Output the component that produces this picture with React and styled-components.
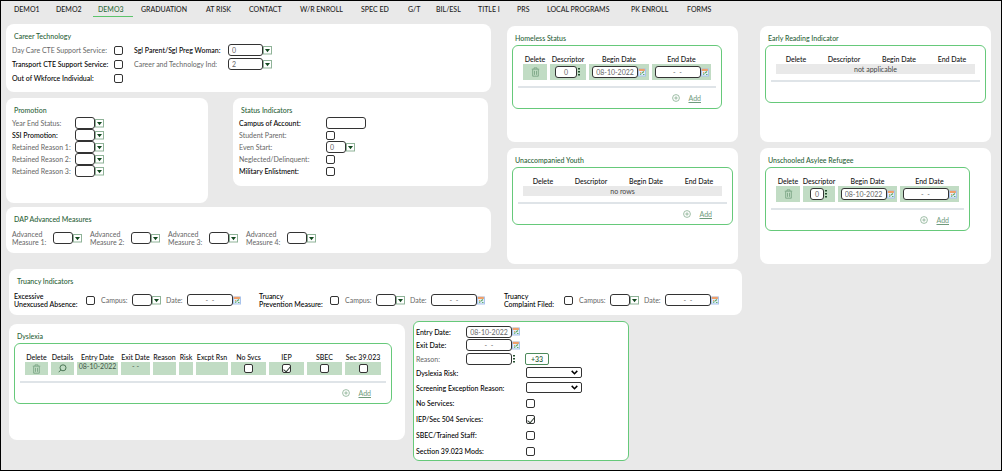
import React, { useId } from 'react';
import styled, { createGlobalStyle } from 'styled-components';

const GlobalStyle = createGlobalStyle`
  * {
    box-sizing: border-box;
  }
  body {
    margin: 0;
    font-family: Lato, "Open Sans", sans-serif;
    font-size: 7px;
    line-height: 8px;
    color: #111;
    background: #e9e9e9;
  }
  input, select, button {
    font-family: inherit;
    font-size: inherit;
    line-height: inherit;
    margin: 0;
    padding: 0;
  }
`;

const Page = styled.div`
  min-height: 100vh;
  border: 1px solid #000;
  padding: 0 10px 8px 5px;
  background: #e9e9e9;
`;

/* ---- tabs ---- */

const Tabs = styled.nav`
  display: grid;
  grid-template-columns: 42px 42px 43px 65px 43px 51px 61px 47px 28px 42px 39px 30px 84px 56px 40px;
  padding-left: 3px;
  height: 16px;
`;

const Tab = styled.a`
  justify-self: start;
  padding: 4px 9px 3px 5px;
  font-weight: 500;
  white-space: nowrap;
  text-decoration: none;
  color: ${p => (p.$active ? '#2e6b3c' : '#1c1c1c')};
  border-bottom: 1px solid ${p => (p.$active ? '#5cc46c' : 'transparent')};
`;

/* ---- page layout ---- */

const Upper = styled.div`
  display: grid;
  grid-template-columns: 485fr 484fr;
  column-gap: 16px;
  padding-top: 7px;
`;

const LeftColumn = styled.div`
  display: flex;
  flex-direction: column;
`;

const SplitRow = styled.div`
  display: grid;
  grid-template-columns: 202fr 255fr;
  column-gap: 25px;
  align-items: start;
  margin: 6px 3px 4px 0;
`;

const StatusGrid = styled.div`
  display: grid;
  grid-template-columns: 1fr 1fr;
  gap: 6px 22px;
  padding-top: 2px;
`;

const Lower = styled.div`
  padding: 5px 0 0 3px;
`;

const TruancyLine = styled.div`
  display: grid;
  grid-template-columns: 733fr 249fr;
`;

const LowerRow = styled.div`
  display: grid;
  grid-template-columns: 396fr 216fr 354fr;
  column-gap: 8px;
  align-items: start;
  margin-top: 9px;
`;

const Panel = styled.section`
  min-height: ${p => p.$min || 0}px;
  padding: 6px 5px 7px;
  background: #fff;
  border-radius: 8px;
`;

const Title = styled.h2`
  margin: 0;
  padding: 2px 3px 3px;
  font-size: 7px;
  line-height: 8px;
  font-weight: 500;
  color: #2b5f38;
`;

/* ---- form parts ---- */

const FormGrid = styled.div`
  display: grid;
  grid-template-columns: ${p => p.$columns};
  grid-auto-rows: ${p => p.$row}px;
  align-items: center;
  padding-left: 1px;
`;

const MeasureRow = styled.div`
  display: grid;
  grid-template-columns: repeat(4, 78px);
  padding: 4px 0 0 1px;
`;

const Measure = styled.div`
  display: grid;
  grid-template-columns: 41px auto;
  justify-content: start;
`;

const TruancyRow = styled.div`
  display: grid;
  grid-template-columns: 245fr 245fr 233fr;
  padding-top: 4px;
`;

const TruancyGroup = styled.div`
  display: grid;
  grid-template-columns: ${p => p.$label}px 15px 31px 34px 21px auto;
  align-items: center;
  justify-content: start;
`;

const Label = styled.label`
  font-weight: ${p => (p.$strong ? 500 : 400)};
  color: ${p => (p.$strong ? '#000' : '#666')};
  white-space: pre;
`;

const Field = styled.span`
  display: flex;
  align-items: center;
`;

const TextBox = styled.input`
  width: ${p => p.$width || 20}px;
  height: 12px;
  padding: 0 3px;
  color: #666;
  text-align: ${p => p.$align || 'left'};
  background: #fff;
  border: 1px solid #333;
  border-radius: 3px;
`;

const Check = styled.input.attrs({ type: 'checkbox' })`
  appearance: none;
  display: block;
  width: 9px;
  height: 9px;
  border: 1px solid #333;
  border-radius: 2px;
  background: #fff;
  &:checked::after {
    content: "";
    display: block;
    width: 3px;
    height: 6px;
    margin: 0 0 0 2px;
    border: solid #2d3b30;
    border-width: 0 1px 1px 0;
    transform: rotate(40deg);
  }
`;

const IconButton = styled.button`
  display: flex;
  border: none;
  background: none;
  cursor: pointer;
`;

const SelectWrap = styled.span`
  position: relative;
  display: block;
  width: 56px;
  height: 11px;
  svg {
    position: absolute;
    right: 4px;
    top: 3px;
    pointer-events: none;
  }
`;

const SelectBox = styled.select`
  display: block;
  appearance: none;
  width: 100%;
  height: 11px;
  background: #fff;
  border: 1px solid #333;
  border-radius: 2px;
`;

/* ---- tables ---- */

const TableBox = styled.div`
  width: fit-content;
  padding: 8px 5px 0;
  border: 1px solid #66c97a;
  border-radius: 6px;
`;

const Table = styled.table`
  margin: 0 2px;
  border-collapse: separate;
  border-spacing: 3px 0;
  table-layout: fixed;
  width: ${p => p.$width}px;
  th, td {
    padding: 0;
    text-align: center;
    white-space: nowrap;
  }
  th {
    height: 10px;
    font-weight: 500;
  }
  th > span {
    display: flex;
    justify-content: center;
  }
`;

const Cell = styled.td`
  height: ${p => p.$height || 16}px;
  vertical-align: ${p => p.$valign || 'middle'};
  color: #3f5546;
  background: #c1dcc4;
`;

const CellInner = styled.span`
  display: flex;
  align-items: center;
  justify-content: center;
`;

const EmptyCell = styled.td`
  height: 10px;
  color: #444;
  background: #e9e9e9;
`;

const Rule = styled.hr`
  height: 2px;
  margin: 6px 0 0;
  border: none;
  background: #dfe4e8;
`;

const AddRow = styled.div`
  display: flex;
  align-items: center;
  justify-content: flex-end;
  gap: 8px;
  height: 20px;
  padding-right: 15px;
`;

const AddLink = styled.a`
  color: #6f9a7c;
`;

/* ---- dyslexia details ---- */

const DetailBox = styled.section`
  margin-top: -3px;
  padding: 3px 2px 1px;
  background: #fff;
  border: 1px solid #66c97a;
  border-radius: 6px;
`;

const DetailRow = styled.div`
  display: grid;
  grid-template-columns: ${p => (p.$wide ? 110 : 50)}px auto;
  align-items: center;
  justify-content: start;
  height: ${p => p.$height}px;
`;

const CountButton = styled.button`
  width: 24px;
  height: 12px;
  margin-left: 9px;
  font-weight: 600;
  color: #2b5f38;
  background: #fff;
  border: 1px solid #4c8a5b;
  border-radius: 2px;
`;

/* ---- icons ---- */

const TriangleIcon = () => (
  <svg width="9" height="9" viewBox="0 0 9 9">
    <rect x="0.5" y="0.5" width="8" height="7.5" fill="#fff" stroke="#8fb398" />
    <path d="M2 3h5L4.500 6.200z" fill="#12491f" />
  </svg>
);

const CalendarIcon = () => (
  <svg width="8" height="9" viewBox="0 0 8 9">
    <rect x="0" y="0.500" width="8" height="8" fill="#a9c3ec" />
    <rect x="0.800" y="0.800" width="6" height="2.200" fill="#f0a06a" />
    <rect x="1" y="3" width="6" height="4.500" fill="#e4eefb" />
    <path d="M2 6.500l1.500-1M4 5l2-1.500M5 6.500h1.500" stroke="#5fae6c" strokeWidth="1.200" />
    <rect x="2" y="4" width="1.200" height="1" fill="#f0a06a" />
  </svg>
);

const DotsIcon = () => (
  <svg width="4" height="8" viewBox="0 0 4 8">
    <path d="M1 0h2v1.600H1zM1 3h2v1.600H1zM1 6h2v1.600H1z" fill="#24502e" />
  </svg>
);

const TrashIcon = () => (
  <svg width="9" height="10" viewBox="0 0 9 10" fill="none" stroke="#7ba585" strokeWidth="0.900">
    <path d="M0.800 2.200h7.400M3 2V0.900h3V2M1.700 2.400v6.800h5.600V2.400M3.500 3.800v4M5.500 3.800v4" />
  </svg>
);

const SearchIcon = () => (
  <svg width="9" height="9" viewBox="0 0 9 9" fill="none" stroke="#3f6b4b" strokeWidth="0.900">
    <circle cx="5" cy="3.800" r="3" />
    <path d="M2.900 5.900L0.700 8.200" />
  </svg>
);

const PlusIcon = () => (
  <svg width="8" height="8" viewBox="0 0 8 8" fill="none" stroke="#86ad91" strokeWidth="0.800">
    <circle cx="4" cy="4" r="3.400" />
    <path d="M4 2.300v3.400M2.300 4h3.400" />
  </svg>
);

const ChevronIcon = () => (
  <svg width="7" height="5" viewBox="0 0 7 5" fill="none" stroke="#000" strokeWidth="1.500">
    <path d="M0.700 0.900L3.500 3.700L6.300 0.900" />
  </svg>
);

/* ---- controls ---- */

const Lookup = ({ id, value, width, name }) => (
  <Field>
    <TextBox id={id} $width={width} defaultValue={value} aria-label={id ? undefined : name} />
    <IconButton type="button" aria-label="Open list"><TriangleIcon /></IconButton>
  </Field>
);

const DateField = ({ id, value = '-  -', width = 46, name }) => (
  <Field>
    <TextBox id={id} $width={width} $align="center" defaultValue={value} aria-label={id ? undefined : name} />
    <IconButton type="button" aria-label="Pick date"><CalendarIcon /></IconButton>
  </Field>
);

const FormItem = ({ label, strong, type, value, width }) => {
  const id = useId();
  return (
    <>
      <Label htmlFor={id} $strong={strong}>{label}</Label>
      {type === 'check' && <Check id={id} />}
      {type === 'text' && <TextBox id={id} $width={width} />}
      {type === 'lookup' && <Lookup id={id} value={value} width={width} />}
    </>
  );
};

const TruancyItem = ({ label, width }) => {
  const id = useId();
  return (
    <TruancyGroup $label={width}>
      <Label htmlFor={id} $strong>{label}</Label>
      <Check id={id} />
      <Label htmlFor={id + 'campus'}>Campus:</Label>
      <Lookup id={id + 'campus'} />
      <Label htmlFor={id + 'date'}>Date:</Label>
      <DateField id={id + 'date'} />
    </TruancyGroup>
  );
};

const AddBar = ({ children }) => (
  <>
    <Rule />
    <AddRow>{children}</AddRow>
  </>
);

const Add = () => (
  <>
    <PlusIcon />
    <AddLink href="#add">Add</AddLink>
  </>
);

const Heads = ({ names, widths }) => (
  <thead>
    <tr>
      {names.map((name, i) => (
        <th key={name} style={{ width: widths[i] }}><span>{name}</span></th>
      ))}
    </tr>
  </thead>
);

const STATUS_HEADS = ['Delete', 'Descriptor', 'Begin Date', 'End Date'];

const StatusPanel = ({ title, widths, empty, codeWidth, canAdd }) => (
  <Panel $min={116}>
    <Title>{title}</Title>
    <TableBox>
      <Table $width={widths.reduce((a, b) => a + b, 15)}>
        <Heads names={STATUS_HEADS} widths={widths} />
        <tbody>
          {empty ? (
            <tr><EmptyCell colSpan={4}>{empty}</EmptyCell></tr>
          ) : (
            <tr>
              <Cell>
                <CellInner>
                  <IconButton type="button" aria-label="Delete row"><TrashIcon /></IconButton>
                </CellInner>
              </Cell>
              <Cell>
                <CellInner>
                  <TextBox $width={codeWidth} $align="center" defaultValue="0" aria-label="Descriptor" />
                  <IconButton type="button" aria-label="Find descriptor"><DotsIcon /></IconButton>
                </CellInner>
              </Cell>
              <Cell><CellInner><DateField value="08-10-2022" name="Begin Date" /></CellInner></Cell>
              <Cell><CellInner><DateField name="End Date" /></CellInner></Cell>
            </tr>
          )}
        </tbody>
      </Table>
      <AddBar>{canAdd && <Add />}</AddBar>
    </TableBox>
  </Panel>
);

const DYS_HEADS = ['Delete', 'Details', 'Entry Date', 'Exit Date', 'Reason', 'Risk', 'Excpt Rsn', 'No Svcs', 'IEP', 'SBEC', 'Sec 39.023'];
const DYS_WIDTHS = [23, 23, 41, 29, 23, 14, 32, 35, 35, 35, 36];

const DyslexiaPanel = () => (
  <Panel $min={116}>
    <Title>Dyslexia</Title>
    <TableBox>
      <Table $width={DYS_WIDTHS.reduce((a, b) => a + b, 36)}>
        <Heads names={DYS_HEADS} widths={DYS_WIDTHS} />
        <tbody>
          <tr>
            <Cell $height={13}>
              <CellInner>
                <IconButton type="button" aria-label="Delete row"><TrashIcon /></IconButton>
              </CellInner>
            </Cell>
            <Cell $height={13}>
              <CellInner>
                <IconButton type="button" aria-label="Show details"><SearchIcon /></IconButton>
              </CellInner>
            </Cell>
            <Cell $height={13} $valign="top">08-10-2022</Cell>
            <Cell $height={13} $valign="top">- -</Cell>
            <Cell $height={13} />
            <Cell $height={13} />
            <Cell $height={13} />
            {DYS_HEADS.slice(7).map(name => (
              <Cell key={name} $height={13}>
                <CellInner><Check aria-label={name} defaultChecked={name === 'IEP'} /></CellInner>
              </Cell>
            ))}
          </tr>
        </tbody>
      </Table>
      <AddBar><Add /></AddBar>
    </TableBox>
  </Panel>
);

const DyslexiaDetails = () => {
  const id = useId();
  return (
    <DetailBox>
      <DetailRow $height={13}>
        <Label htmlFor={id + 'entry'} $strong>Entry Date:</Label>
        <DateField id={id + 'entry'} value="08-10-2022" />
      </DetailRow>
      <DetailRow $height={14}>
        <Label htmlFor={id + 'exit'} $strong>Exit Date:</Label>
        <DateField id={id + 'exit'} />
      </DetailRow>
      <DetailRow $height={13}>
        <Label htmlFor={id + 'reason'}>Reason:</Label>
        <Field>
          <TextBox id={id + 'reason'} $width={46} />
          <IconButton type="button" aria-label="Find reason"><DotsIcon /></IconButton>
          <CountButton type="button">+33</CountButton>
        </Field>
      </DetailRow>
      {['Dyslexia Risk:', 'Screening Exception Reason:'].map(label => (
        <DetailRow key={label} $wide $height={15}>
          <Label htmlFor={id + label} $strong>{label}</Label>
          <SelectWrap>
            <SelectBox id={id + label} />
            <ChevronIcon />
          </SelectWrap>
        </DetailRow>
      ))}
      {['No Services:', 'IEP/Sec 504 Services:', 'SBEC/Trained Staff:', 'Section 39.023 Mods:'].map((label, i) => (
        <DetailRow key={label} $wide $height={16}>
          <Label htmlFor={id + label} $strong>{label}</Label>
          <Check id={id + label} defaultChecked={i === 1} />
        </DetailRow>
      ))}
    </DetailBox>
  );
};

const TABS = ['DEMO1', 'DEMO2', 'DEMO3', 'GRADUATION', 'AT RISK', 'CONTACT', 'W/R ENROLL', 'SPEC ED', 'G/T', 'BIL/ESL', 'TITLE I', 'PRS', 'LOCAL PROGRAMS', 'PK ENROLL', 'FORMS'];

function App() {
  return (
    <>
      <GlobalStyle />
      <Page>
        <Tabs>
          {TABS.map(tab => (
            <Tab key={tab} href="#tab" $active={tab === 'DEMO3'}>{tab}</Tab>
          ))}
        </Tabs>
        <Upper>
          <LeftColumn>
            <Panel>
              <Title>Career Technology</Title>
              <FormGrid $columns="102px 20px 94px auto" $row={14}>
                <FormItem label="Day Care CTE Support Service:" type="check" />
                <FormItem label="Sgl Parent/Sgl Preg Woman:" strong type="lookup" value="0" width={35} />
                <FormItem label="Transport CTE Support Service:" strong type="check" />
                <FormItem label="Career and Technology Ind:" type="lookup" value="2" width={35} />
                <FormItem label="Out of Wkforce Individual:" strong type="check" />
              </FormGrid>
            </Panel>
            <SplitRow>
              <Panel $min={105}>
                <Title>Promotion</Title>
                <FormGrid $columns="63px auto" $row={12}>
                  <FormItem label="Year End Status:" type="lookup" />
                  <FormItem label="SSI Promotion:" strong type="lookup" />
                  <FormItem label="Retained Reason 1:" type="lookup" />
                  <FormItem label="Retained Reason 2:" type="lookup" />
                  <FormItem label="Retained Reason 3:" type="lookup" />
                </FormGrid>
              </Panel>
              <Panel $min={88}>
                <Title>Status Indicators</Title>
                <FormGrid $columns="87px auto" $row={12}>
                  <FormItem label="Campus of Account:" strong type="text" width={40} />
                  <FormItem label="Student Parent:" type="check" />
                  <FormItem label="Even Start:" type="lookup" value="0" />
                  <FormItem label="Neglected/Delinquent:" type="check" />
                  <FormItem label="Military Enlistment:" strong type="check" />
                </FormGrid>
              </Panel>
            </SplitRow>
            <Panel $min={46}>
              <Title>DAP Advanced Measures</Title>
              <MeasureRow>
                {[1, 2, 3, 4].map(n => (
                  <Measure key={n}>
                    <FormItem label={`Advanced\nMeasure ${n}:`} type="lookup" />
                  </Measure>
                ))}
              </MeasureRow>
            </Panel>
          </LeftColumn>
          <StatusGrid>
            <StatusPanel title="Homeless Status" widths={[24, 36, 60, 59]} codeWidth={22} canAdd />
            <StatusPanel title="Early Reading Indicator" widths={[40, 50, 54, 46]} empty="not applicable" />
            <StatusPanel title="Unaccompanied Youth" widths={[40, 50, 54, 46]} empty="no rows" canAdd />
            <StatusPanel title="Unschooled Asylee Refugee" widths={[24, 32, 59, 59]} codeWidth={14} canAdd />
          </StatusGrid>
        </Upper>
        <Lower>
          <TruancyLine>
            <Panel>
              <Title>Truancy Indicators</Title>
              <TruancyRow>
                <TruancyItem label={'Excessive\nUnexcused Absence:'} width={72} />
                <TruancyItem label={'Truancy\nPrevention Measure:'} width={71} />
                <TruancyItem label={'Truancy\nComplaint Filed:'} width={60} />
              </TruancyRow>
            </Panel>
          </TruancyLine>
          <LowerRow>
            <DyslexiaPanel />
            <DyslexiaDetails />
          </LowerRow>
        </Lower>
      </Page>
    </>
  );
}

export default App;
